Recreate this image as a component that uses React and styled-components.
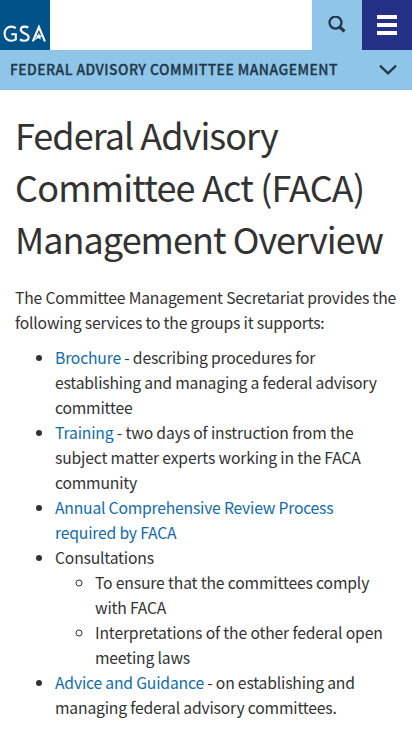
import React from "react";
import styled, { createGlobalStyle } from "styled-components";

const GlobalStyle = createGlobalStyle`
  * { box-sizing: border-box; }
  html { overflow: hidden; }
  body {
    margin: 0;
    background: #fff;
    color: #323232;
    font-family: "Noto Sans CJK SC", "Noto Sans", sans-serif;
    font-size: 15.7px;
    line-height: 25px;
    letter-spacing: -0.18px;
  }
`;

const Page = styled.div`
  width: 412px;
  height: 732px;
  overflow: hidden;
  background: #fff;
`;

const Header = styled.header`
  display: flex;
  height: 50px;
`;

const Logo = styled.a`
  width: 50px;
  height: 50px;
  margin-right: auto;
  background: #005288;
`;

const HeaderButton = styled.button`
  display: flex;
  align-items: center;
  justify-content: center;
  width: 50px;
  height: 50px;
  padding: 0;
  border: 0;
  background: ${(p) => p.$background};
`;

const SectionBar = styled.nav`
  display: flex;
  align-items: center;
  justify-content: space-between;
  height: 40px;
  padding: 0 14px 0 10px;
  background: #8ec5e9;
  color: #22384a;
`;

const SectionTitle = styled.span`
  padding-bottom: 2px;
  font-size: 13.9px;
  font-weight: 500;
  letter-spacing: 0.46px;
  text-transform: uppercase;
  white-space: nowrap;
  -webkit-text-stroke: 0.3px #22384a;
`;

const Content = styled.main`
  padding: 18px 15px 0;
`;

const Title = styled.h1`
  margin: 0 0 21px;
  font-size: 36px;
  font-weight: 400;
  line-height: 52px;
  letter-spacing: -0.97px;
`;

const Line = styled.span`
  display: block;
  width: max-content;
  white-space: nowrap;
  letter-spacing: ${(p) => p.$spacing || "inherit"};
`;

const Intro = styled.p`
  margin: 0 0 10px;
`;

const List = styled.ul`
  margin: 0;
  padding-left: 40px;
`;

const Link = styled.a`
  color: #0f6cac;
  text-decoration: none;
`;

export default function App() {
  return (
    <Page>
      <GlobalStyle />
      <Header>
        <Logo aria-label="GSA">
          <svg width="50" height="50" viewBox="0 0 50 50" fill="none" stroke="#fff" strokeWidth="2.1">
            <path d="M15.8 28.2C14.4 27.1 12.9 26.6 11.2 26.6C7.2 26.6 4.6 29.6 4.6 33.6C4.6 37.9 7.2 40.8 11.3 40.8C13 40.8 14.6 40.3 15.8 39.5V34.3H11.2" />
            <path d="M28.3 27.7C27.2 26.9 26 26.6 24.6 26.6C22.3 26.6 20.8 27.9 20.8 29.8C20.8 34 28.6 32.9 28.6 37C28.6 39.3 26.8 40.8 24.1 40.8C22.5 40.8 21 40.3 19.9 39.4" />
            <path d="M32.8 41.4L38.9 27L44.9 41.4" />
            <path fill="#fff" stroke="none" d="M39 32.6L39.6 35.2L43.8 35.7L40.2 37L41 39.6L38.2 37.9L33.6 40.8L36.9 36.7L35.6 35.3L38 35.2Z" />
          </svg>
        </Logo>
        <HeaderButton $background="#8ec5e9" aria-label="Search">
          <svg width="18" height="18" viewBox="0 0 18 18" fill="none" stroke="#22384a">
            <circle cx="7.5" cy="6.6" r="6" strokeWidth="2.3" />
            <path d="M11.6 10.8L16.5 15.4" strokeWidth="3.2" />
          </svg>
        </HeaderButton>
        <HeaderButton $background="#242f86" aria-label="Menu">
          <svg width="20" height="20" viewBox="0 0 20 20" fill="#fff">
            <path d="M0 0h20v4H0zM0 8h20v4H0zM0 16h20v4H0z" />
          </svg>
        </HeaderButton>
      </Header>
      <SectionBar>
        <SectionTitle>Federal Advisory Committee Management</SectionTitle>
        <svg width="20" height="12" viewBox="0 0 20 12" fill="none" stroke="#22384a" strokeWidth="2.2">
          <path d="M2 1.6L10 9.4L18 1.6" />
        </svg>
      </SectionBar>
      <Content>
        <Title>
          <Line>Federal Advisory</Line>
          <Line $spacing="-0.82px">Committee Act (FACA)</Line>
          <Line>Management Overview</Line>
        </Title>
        <Intro>
          <Line>The Committee Management Secretariat provides the</Line>
          <Line>following services to the groups it supports:</Line>
        </Intro>
        <List>
          <li>
            <Line><Link>Brochure</Link> - describing procedures for</Line>
            <Line>establishing and managing a federal advisory</Line>
            <Line>committee</Line>
          </li>
          <li>
            <Line $spacing="-0.15px"><Link>Training</Link> - two days of instruction from the</Line>
            <Line $spacing="-0.15px">subject matter experts working in the FACA</Line>
            <Line>community</Line>
          </li>
          <li>
            <Line $spacing="-0.2px"><Link>Annual Comprehensive Review Process</Link></Line>
            <Line><Link>required by FACA</Link></Line>
          </li>
          <li>
            <Line>Consultations</Line>
            <List>
              <li>
                <Line $spacing="-0.15px">To ensure that the committees comply</Line>
                <Line>with FACA</Line>
              </li>
              <li>
                <Line $spacing="-0.15px">Interpretations of the other federal open</Line>
                <Line>meeting laws</Line>
              </li>
            </List>
          </li>
          <li>
            <Line><Link>Advice and Guidance</Link> - on establishing and</Line>
            <Line>managing federal advisory committees.</Line>
          </li>
        </List>
      </Content>
    </Page>
  );
}
